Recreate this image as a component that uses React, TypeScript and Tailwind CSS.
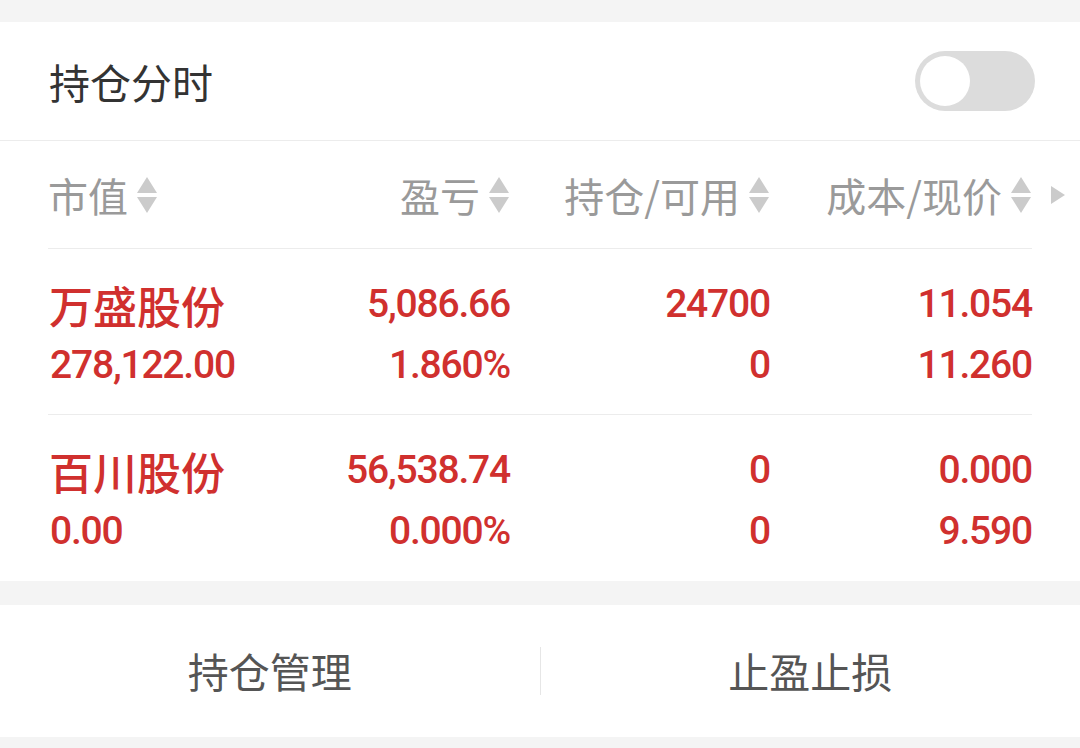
import React from "react";

const SortArrows = () => (
  <svg width="22" height="38" viewBox="0 0 22 38" className="shrink-0 ml-[8px]">
    <polygon points="11,1 21,17 1,17" fill="#cbcbcb" />
    <polygon points="1,21 21,21 11,37" fill="#cbcbcb" />
  </svg>
);

const rows = [
  { name: "万盛股份", value: "278,122.00", pl: "5,086.66", plPct: "1.860%", hold: "24700", avail: "0", cost: "11.054", price: "11.260" },
  { name: "百川股份", value: "0.00", pl: "56,538.74", plPct: "0.000%", hold: "0", avail: "0", cost: "0.000", price: "9.590" },
];

export default function App() {
  return (
    <div className="w-[1080px] h-[748px] bg-[#f4f4f4] pt-[22px] overflow-hidden font-['Roboto','Noto_Sans_CJK_SC',sans-serif]">
      <section className="bg-white">
        <div className="h-[119px] flex items-center justify-between pl-[49px] pr-[45px] border-b border-[#ececec]">
          <span className="text-[41px] leading-none text-[#333] font-['Noto_Sans_CJK_SC',sans-serif]">持仓分时</span>
          <div className="w-[120px] h-[60px] rounded-full bg-[#dcdcdc] p-[5px] flex items-center">
            <div className="w-[50px] h-[50px] rounded-full bg-white"></div>
          </div>
        </div>
        <div className="mx-[48px] h-[108px] grid grid-cols-[220px_242px_260px_262px] items-center border-b border-[#ececec] text-[#9a9a9a] text-[40px] leading-none font-['Noto_Sans_CJK_SC',sans-serif]">
          <div className="flex items-center"><span>市值</span><SortArrows /></div>
          <div className="flex items-center justify-end"><span>盈亏</span><SortArrows /></div>
          <div className="flex items-center justify-end"><span>持仓/可用</span><SortArrows /></div>
          <div className="flex items-center justify-end relative">
            <span>成本/现价</span><SortArrows />
            <svg width="16" height="20" viewBox="0 0 16 20" className="absolute right-[-34px] top-1/2 -translate-y-1/2">
              <polygon points="1,1 15,10 1,19" fill="#cbcbcb" />
            </svg>
          </div>
        </div>
        {rows.map((r, i) => (
          <div
            key={r.name}
            className={`mx-[48px] h-[166px] pt-[25px] pb-[19px] grid grid-cols-[220px_242px_260px_262px] text-[#d0302e] ${i === 0 ? "border-b border-[#ececec]" : ""}`}
          >
            <div className="flex flex-col">
              <span className="h-[61px] flex items-center text-[44px] font-medium font-['Noto_Sans_CJK_SC',sans-serif] pl-[1px]">{r.name}</span>
              <span className="h-[61px] flex items-center text-[39px] font-medium tracking-[-1.2px] pl-[2px]">{r.value}</span>
            </div>
            <div className="flex flex-col items-end text-[39px] font-medium tracking-[-1.2px]">
              <span className="h-[61px] flex items-center">{r.pl}</span>
              <span className="h-[61px] flex items-center">{r.plPct}</span>
            </div>
            <div className="flex flex-col items-end text-[39px] font-medium tracking-[-1.2px]">
              <span className="h-[61px] flex items-center">{r.hold}</span>
              <span className="h-[61px] flex items-center">{r.avail}</span>
            </div>
            <div className="flex flex-col items-end text-[39px] font-medium tracking-[-1.2px]">
              <span className="h-[61px] flex items-center">{r.cost}</span>
              <span className="h-[61px] flex items-center">{r.price}</span>
            </div>
          </div>
        ))}
      </section>
      <div className="h-[24px]"></div>
      <section className="bg-white h-[132px] flex items-center text-[41px] text-[#555] font-['Noto_Sans_CJK_SC',sans-serif]">
        <div className="flex-1 flex justify-center">持仓管理</div>
        <div className="w-px h-[48px] bg-[#e6e6e6]"></div>
        <div className="flex-1 flex justify-center">止盈止损</div>
      </section>
    </div>
  );
}
